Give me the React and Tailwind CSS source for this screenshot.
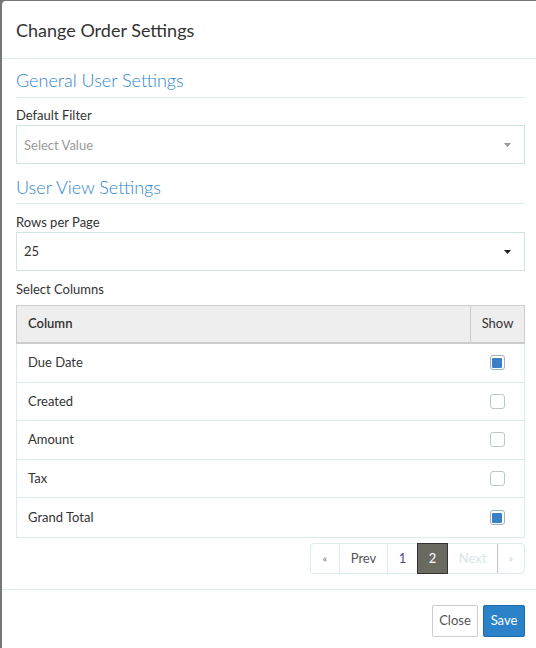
import React from "react";

const rows = [
  { name: "Due Date", checked: true },
  { name: "Created", checked: false },
  { name: "Amount", checked: false },
  { name: "Tax", checked: false },
  { name: "Grand Total", checked: true },
];

function Caret({ color }) {
  return (
    <svg width="7" height="4" viewBox="0 0 7 4" className="shrink-0">
      <path d="M0 0 H7 L3.5 4 Z" fill={color} />
    </svg>
  );
}

function Checkbox({ checked }) {
  return (
    <div
      className={
        "w-[15px] h-[15px] rounded-[3px] border flex items-center justify-center bg-white " +
        (checked ? "border-[#9fb2c4]" : "border-[#b9c9c9]")
      }
    >
      {checked && <div className="w-[10px] h-[10px] rounded-[1px] bg-[#3a80c6]" />}
    </div>
  );
}

export default function App() {
  return (
    <div
      className="w-[536px] h-[648px] bg-[#777777] overflow-hidden text-[#333333]"
      style={{ fontFamily: "Lato, 'Open Sans', 'Liberation Sans', sans-serif" }}
    >
      <div className="ml-[2px] mt-[1px] w-[537px] h-[700px] bg-white rounded-tl-[4px] flex flex-col">
        {/* Header */}
        <div className="h-[58px] border-b border-[#dcecec] flex items-center px-[14px]">
          <h1 className="text-[18px] leading-[24px] text-[#333] pt-[1px]">Change Order Settings</h1>
        </div>

        {/* Body */}
        <div className="px-[14px] pb-[15px] border-b border-[#dcecec]">
          <div className="pt-[9px] pb-[5px] border-b border-[#dcecec]">
            <h2 className="text-[18px] leading-[24px] font-light text-[#2f86cc]">General User Settings</h2>
          </div>
          <div className="mt-[8px] text-[13px] leading-[18px]">Default Filter</div>
          <div className="mt-[1px] h-[39px] border border-[#cfe3e3] flex items-center justify-between pl-[7px] pr-[13px]">
            <span className="text-[13px] text-[#999999] pt-[2px]">Select Value</span>
            <Caret color="#999999" />
          </div>

          <div className="mt-[11px] pb-[4px] border-b border-[#dcecec]">
            <h2 className="text-[18px] leading-[24px] font-light text-[#2f86cc]">User View Settings</h2>
          </div>
          <div className="mt-[9px] text-[13px] leading-[18px]">Rows per Page</div>
          <div className="mt-[1px] h-[39px] border border-[#cfe3e3] flex items-center justify-between pl-[7px] pr-[13px]">
            <span className="text-[13px] text-[#333] pt-[1px]">25</span>
            <Caret color="#222222" />
          </div>

          <div className="mt-[9px] text-[13px] leading-[18px]">Select Columns</div>

          {/* Table */}
          <div className="mt-[7px] border border-[#dcecec]">
            <div className="h-[39px] flex bg-[#eeeeee] border-b-2 border-[#cccccc] -mx-[1px] -mt-[1px] border-t border-x">
              <div className="flex-1 flex items-center pl-[11px] text-[13px] font-semibold text-[#333]">Column</div>
              <div className="w-[54px] flex items-center justify-center border-l border-[#cccccc] text-[13px] text-[#333]">Show</div>
            </div>
            {rows.map((r, i) => (
              <div
                key={r.name}
                className={
                  "h-[38.6px] flex items-center " + (i < rows.length - 1 ? "border-b border-[#dcecec]" : "")
                }
              >
                <div className="flex-1 pl-[11px] text-[13px] text-[#333]">{r.name}</div>
                <div className="w-[54px] flex items-center justify-center">
                  <Checkbox checked={r.checked} />
                </div>
              </div>
            ))}
          </div>

          {/* Pagination */}
          <div className="mt-[5px] flex justify-end">
            <div className="flex h-[31px] border border-[#dcecec] rounded-[4px] text-[13px]">
              <div className="w-[28px] flex items-center justify-center text-[#6a5f98] text-[10px]">«</div>
              <div className="w-[48px] flex items-center justify-center border-l border-[#dcecec] text-[#555]">Prev</div>
              <div className="w-[30px] flex items-center justify-center border-l border-[#dcecec] text-[#554a88]">1</div>
              <div className="w-[31px] -my-[1px] flex items-center justify-center bg-[#6b6a61] border border-[#333] text-white">2</div>
              <div className="w-[49px] flex items-center justify-center text-[#d6e6e6]">Next</div>
              <div className="w-[27px] flex items-center justify-center border-l border-[#c8c0cc] text-[#d4cedb] text-[10px]">»</div>
            </div>
          </div>
        </div>

        {/* Footer */}
        <div className="pt-[15px] pr-[14px] flex justify-end gap-[5px]">
          <button className="h-[32px] w-[46px] border border-[#cccccc] bg-white rounded-[2px] text-[13px] text-[#555]">Close</button>
          <button className="h-[32px] w-[42px] border border-[#1f6aa8] bg-[#2b82c9] rounded-[2px] text-[13px] text-white">Save</button>
        </div>
      </div>
    </div>
  );
}
